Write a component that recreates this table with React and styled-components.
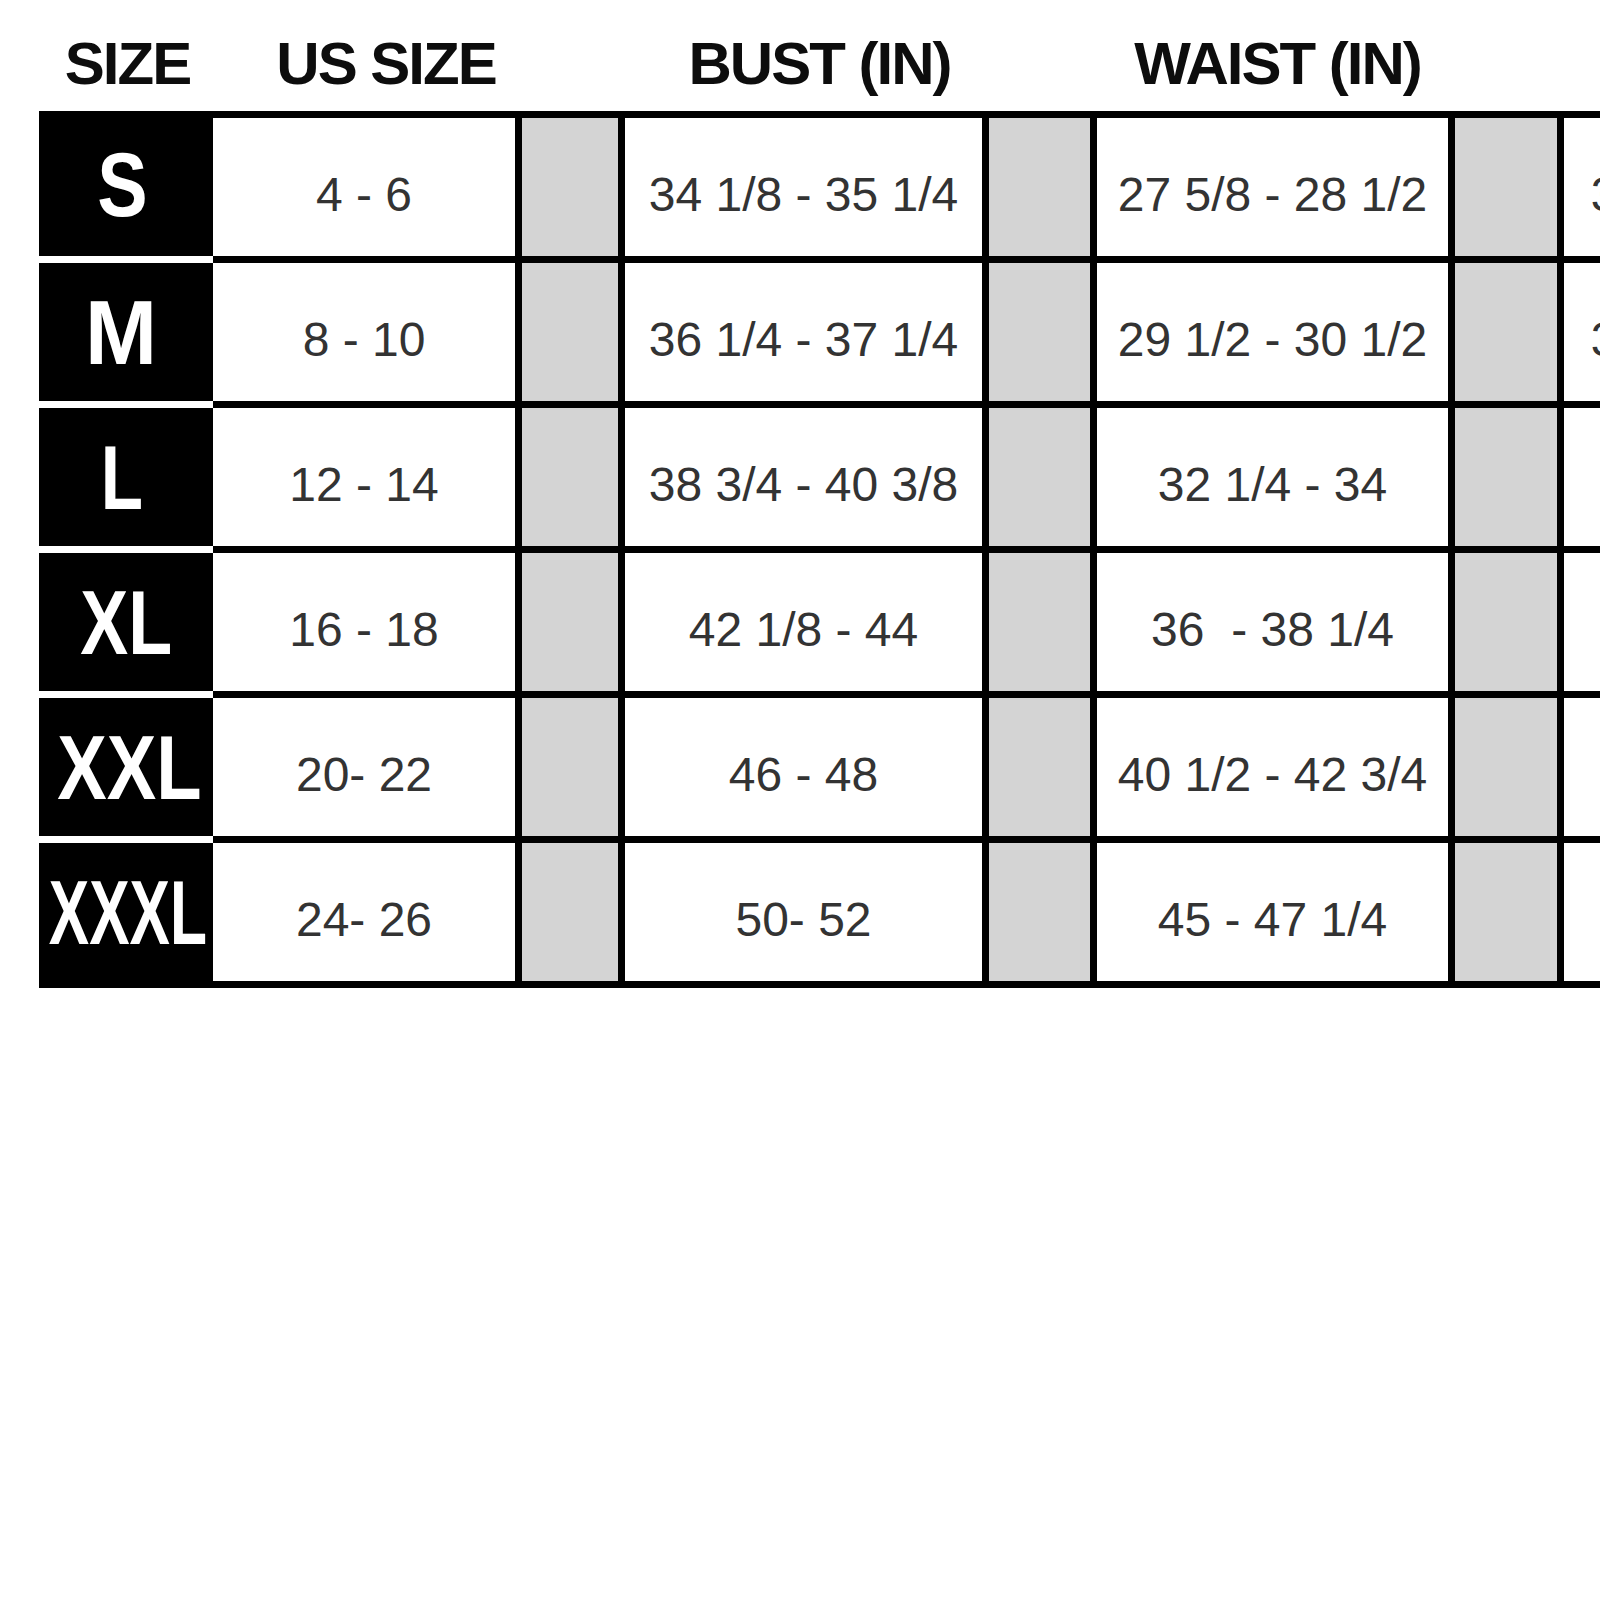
import React from 'react';
import styled, { createGlobalStyle } from 'styled-components';

const GlobalStyle = createGlobalStyle`
  html, body { margin: 0; padding: 0; background: #fff; }
  body { width: 1600px; height: 1600px; overflow: hidden; }
`;

const Page = styled.div`
  width: 1600px;
  height: 1600px;
  overflow: hidden;
  box-sizing: border-box;
  padding: 34px 0 0 39px;
  background: #fff;
  font-family: "Liberation Sans", Arial, sans-serif;
`;

const HeaderRow = styled.div`
  display: grid;
  grid-template-columns: 167px 302px 96px 357px 101px 351px;
  column-gap: 7px;
  height: 60px;
  width: max-content;
`;

const Head = styled.div`
  box-sizing: border-box;
  padding-left: ${p => (p.$shift || 0) * 2}px;
  text-align: center;
  white-space: nowrap;
  font-size: 60px;
  line-height: 60px;
  font-weight: 700;
  letter-spacing: -2px;
  color: #0d0d0d;
`;

const Table = styled.div`
  display: flex;
  margin-top: 17px;
  width: max-content;
`;

const LabelColumn = styled.div`
  display: flex;
  flex-direction: column;
  gap: 7px;
  width: 174px;
  flex: none;
  border-top: 7px solid #000;
  border-bottom: 7px solid #000;
  background: #fff;
`;

const SizeBox = styled.div`
  height: 138px;
  background: #000;
  display: flex;
  align-items: center;
  justify-content: center;
  overflow: visible;
`;

const SizeText = styled.span`
  display: inline-block;
  color: #fff;
  font-weight: 700;
  font-size: 91px;
  line-height: 1;
  white-space: nowrap;
  transform: translate(${p => p.$dx || 0}px, ${p => p.$dy || 0}px) scaleX(${p => p.$squeeze});
`;

const DataGrid = styled.div`
  flex: none;
  display: grid;
  grid-template-columns: 302px 96px 357px 101px 351px 102px 363px;
  grid-auto-rows: 138px;
  gap: 7px;
  padding: 7px 0;
  background: #000;
`;

const Cell = styled.div`
  background: ${p => (p.$shade ? '#d4d4d4' : '#fff')};
  display: flex;
  align-items: center;
  justify-content: center;
  box-sizing: border-box;
  padding-top: 16px;
  font-size: 48px;
  line-height: 1;
  color: #333;
  white-space: pre;
`;

const rows = [
  { size: 'S', squeeze: 0.83, dx: -4, dy: -3, us: '4 - 6', bust: '34 1/8 - 35 1/4', waist: '27 5/8 - 28 1/2', hip: '37 1/4 - 38 1/2' },
  { size: 'M', squeeze: 0.95, dx: -5, dy: 0, us: '8 - 10', bust: '36 1/4 - 37 1/4', waist: '29 1/2 - 30 1/2', hip: '39 1/2 - 40 1/2' },
  { size: 'L', squeeze: 0.76, dx: -4, dy: 0, us: '12 - 14', bust: '38 3/4 - 40 3/8', waist: '32 1/4 - 34', hip: '42 - 43 3/4' },
  { size: 'XL', squeeze: 0.79, dx: 0, dy: 0, us: '16 - 18', bust: '42 1/8 - 44', waist: '36  - 38 1/4', hip: '46 - 48 1/4' },
  { size: 'XXL', squeeze: 0.815, dx: 3, dy: 0, us: '20- 22', bust: '46 - 48', waist: '40 1/2 - 42 3/4', hip: '50 - 52' },
  { size: 'XXXL', squeeze: 0.665, dx: 2, dy: 0, us: '24- 26', bust: '50- 52', waist: '45 - 47 1/4', hip: '54 - 56' },
];

export default function App() {
  return (
    <Page>
      <GlobalStyle />
      <HeaderRow>
        <Head $shift={5}>SIZE</Head>
        <Head $shift={22}>US SIZE</Head>
        <Head />
        <Head $shift={16}>BUST (IN)</Head>
        <Head />
        <Head $shift={5}>WAIST (IN)</Head>
      </HeaderRow>
      <Table>
        <LabelColumn>
          {rows.map(r => (
            <SizeBox key={r.size}>
              <SizeText $squeeze={r.squeeze} $dx={r.dx} $dy={r.dy}>{r.size}</SizeText>
            </SizeBox>
          ))}
        </LabelColumn>
        <DataGrid>
          {rows.map(r => (
            <React.Fragment key={r.size}>
              <Cell>{r.us}</Cell>
              <Cell $shade />
              <Cell>{r.bust}</Cell>
              <Cell $shade />
              <Cell>{r.waist}</Cell>
              <Cell $shade />
              <Cell>{r.hip}</Cell>
            </React.Fragment>
          ))}
        </DataGrid>
      </Table>
    </Page>
  );
}
